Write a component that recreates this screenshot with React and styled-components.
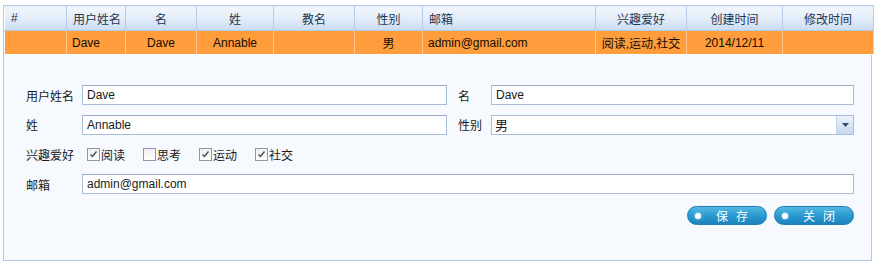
import React from "react";
import styled, { createGlobalStyle } from "styled-components";

const GlobalStyle = createGlobalStyle`
  body {
    margin: 0;
    background: #fff;
    font-family: "Liberation Sans", "Noto Sans CJK SC", sans-serif;
    font-size: 12px;
    color: #1a1a1a;
  }
`;

const columns = [
  { key: "id", title: "#", width: 62, align: "left" },
  { key: "username", title: "用户姓名", width: 59, align: "left" },
  { key: "first", title: "名", width: 71 },
  { key: "last", title: "姓", width: 77 },
  { key: "christian", title: "教名", width: 81 },
  { key: "gender", title: "性别", width: 68 },
  { key: "email", title: "邮箱", width: 173, align: "left" },
  { key: "hobby", title: "兴趣爱好", width: 91 },
  { key: "created", title: "创建时间", width: 96 },
  { key: "modified", title: "修改时间", width: 91 },
];

const row = {
  id: "",
  username: "Dave",
  first: "Dave",
  last: "Annable",
  christian: "",
  gender: "男",
  email: "admin@gmail.com",
  hobby: "阅读,运动,社交",
  created: "2014/12/11",
  modified: "",
};

const hobbies = [
  { label: "阅读", checked: true },
  { label: "思考", checked: false },
  { label: "运动", checked: true },
  { label: "社交", checked: true },
];

export default function App() {
  return (
    <>
      <GlobalStyle />
      <Page>
        <Panel>
          <Grid>
            <colgroup>
              {columns.map((c) => (
                <col key={c.key} style={{ width: c.width }} />
              ))}
            </colgroup>
            <thead>
              <tr>
                {columns.map((c) => (
                  <HeadCell key={c.key} $align={c.align}>
                    {c.title}
                  </HeadCell>
                ))}
              </tr>
            </thead>
            <tbody>
              <tr>
                {columns.map((c) => (
                  <BodyCell key={c.key} $align={c.align}>
                    {row[c.key]}
                  </BodyCell>
                ))}
              </tr>
            </tbody>
          </Grid>

          <Form>
            <Label>用户姓名</Label>
            <TextInput defaultValue="Dave" />
            <Label $second>名</Label>
            <TextInput defaultValue="Dave" />

            <Label>姓</Label>
            <TextInput defaultValue="Annable" />
            <Label $second>性别</Label>
            <Select>
              <span>男</span>
              <DropButton>
                <svg width="7" height="4" viewBox="0 0 7 4">
                  <path d="M0 0h7L3.5 4z" fill="#2c4a6e" />
                </svg>
              </DropButton>
            </Select>

            <Label>兴趣爱好</Label>
            <Checks>
              {hobbies.map((h) => (
                <CheckItem key={h.label}>
                  <Box>
                    {h.checked && (
                      <svg width="9" height="9" viewBox="0 0 9 9">
                        <path
                          d="M1.5 4.5l2 2 4-5"
                          fill="none"
                          stroke="#3a4a5a"
                          strokeWidth="1.3"
                        />
                      </svg>
                    )}
                  </Box>
                  {h.label}
                </CheckItem>
              ))}
            </Checks>

            <Label>邮箱</Label>
            <TextInput $wide defaultValue="admin@gmail.com" />

            <Actions>
              <PillButton>保存</PillButton>
              <PillButton>关闭</PillButton>
            </Actions>
          </Form>
        </Panel>
      </Page>
    </>
  );
}

const Page = styled.div`
  padding: 5px 4px 0 3px;
`;

const Panel = styled.div`
  width: 869px;
  height: 256px;
  box-sizing: border-box;
  border: 1px solid #b4c7dc;
  border-top: none;
  background: #f6f9fd;
`;

const Grid = styled.table`
  width: 869px;
  border-collapse: collapse;
  table-layout: fixed;
`;

const HeadCell = styled.th`
  height: 24px;
  padding: 0 6px;
  border: 1px solid #b6cbe4;
  border-left-color: #fff;
  background: linear-gradient(#f3f7fd, #e3ecf8 50%, #c9dcf3);
  color: #233650;
  font-weight: normal;
  text-align: ${(p) => p.$align || "center"};
  white-space: nowrap;
  overflow: hidden;
`;

const BodyCell = styled.td`
  height: 23px;
  padding: 0 5px;
  background: #ff9c3b;
  border-right: 1px solid #ffc68e;
  border-bottom: 1px solid #fff;
  color: #140d04;
  text-align: ${(p) => p.$align || "center"};
  white-space: nowrap;
  overflow: hidden;
`;

const Form = styled.div`
  display: grid;
  grid-template-columns: 56px 365px 44px 363px;
  grid-auto-rows: 20px;
  row-gap: 9.7px;
  align-items: center;
  padding: 30px 0 0 22px;
`;

const Label = styled.label`
  padding-left: ${(p) => (p.$second ? "11px" : "0")};
  color: #1a1a1a;
`;

const TextInput = styled.input`
  grid-column: ${(p) => (p.$wide ? "2 / 5" : "auto")};
  height: 20px;
  box-sizing: border-box;
  margin: 0;
  padding: 0 4px;
  border: 1px solid #a9bdd4;
  border-top-color: #98acc4;
  background: #fff;
  font: inherit;
  color: #1a1a1a;
  outline: none;
`;

const Select = styled.div`
  display: flex;
  align-items: center;
  justify-content: space-between;
  height: 20px;
  box-sizing: border-box;
  padding-left: 3px;
  border: 1px solid #a9bdd4;
  background: #fff;
  font-size: 13px;
`;

const DropButton = styled.span`
  display: flex;
  align-items: center;
  justify-content: center;
  width: 16px;
  height: 18px;
  border-left: 1px solid #c3d4e8;
  background: linear-gradient(#e9f1fb, #c6d9ef);
`;

const Checks = styled.div`
  grid-column: 2 / 5;
  display: flex;
  gap: 18px;
  padding-left: 5px;
`;

const CheckItem = styled.span`
  display: flex;
  align-items: center;
  gap: 1px;
`;

const Box = styled.span`
  display: flex;
  align-items: center;
  justify-content: center;
  width: 11px;
  height: 11px;
  border: 1px solid #8e9aa8;
  background: linear-gradient(#f0f0f0, #fff);
`;

const Actions = styled.div`
  grid-column: 1 / 5;
  display: flex;
  justify-content: flex-end;
  gap: 7px;
  margin-top: 3px;
`;

const PillButton = styled.button`
  position: relative;
  width: 80px;
  height: 19px;
  padding: 0 0 0 10px;
  border: 1px solid #1e7fb2;
  border-radius: 10px;
  background: linear-gradient(#55b8e4, #2a9ad0 50%, #1a82bd);
  box-shadow: 0 1px 2px #ffffff, 0 0 0 1px #e8f3fa;
  color: #fff;
  font: inherit;
  letter-spacing: 8px;
  text-indent: 8px;
  cursor: pointer;

  &::before {
    content: "";
    position: absolute;
    left: 7px;
    top: 6px;
    width: 6px;
    height: 6px;
    border-radius: 50%;
    background: #fff;
    box-shadow: 0 0 3px #b8ecff;
  }
`;
